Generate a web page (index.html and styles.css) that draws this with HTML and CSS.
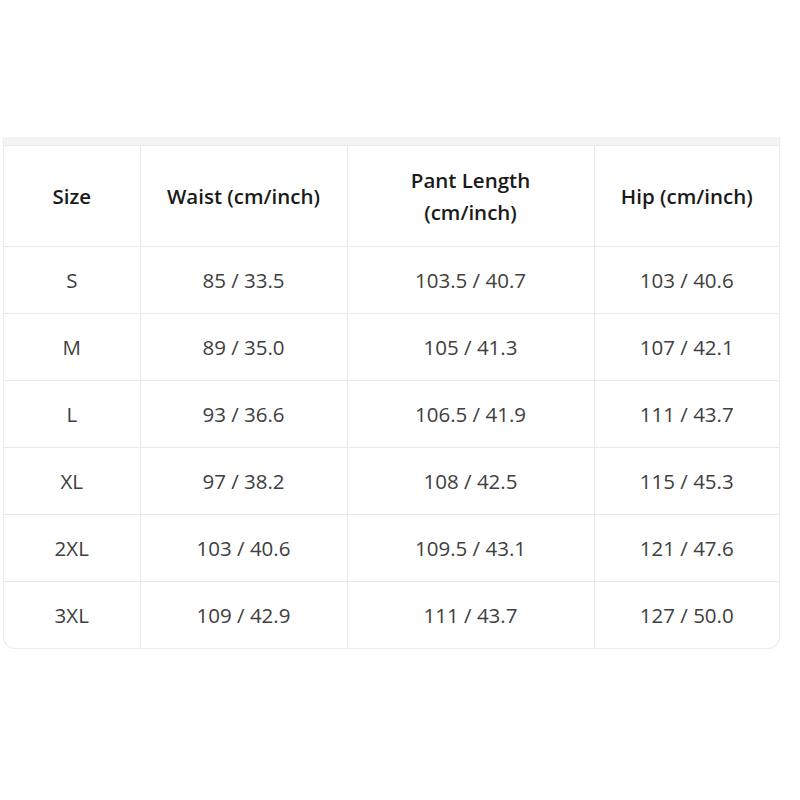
FILE: index.html
```html
<!DOCTYPE html>
<html>
<head>
<meta charset="utf-8">
<link rel="stylesheet" href="styles.css">
</head>
<body>
<div class="card">
  <div class="strip"></div>
  <table class="sizes">
    <colgroup>
      <col class="c1"><col class="c2"><col class="c3"><col class="c4">
    </colgroup>
    <thead>
      <tr><th>Size</th><th>Waist (cm/inch)</th><th>Pant Length<br>(cm/inch)</th><th>Hip (cm/inch)</th></tr>
    </thead>
    <tbody>
      <tr><td>S</td><td>85 / 33.5</td><td>103.5 / 40.7</td><td>103 / 40.6</td></tr>
      <tr><td>M</td><td>89 / 35.0</td><td>105 / 41.3</td><td>107 / 42.1</td></tr>
      <tr><td>L</td><td>93 / 36.6</td><td>106.5 / 41.9</td><td>111 / 43.7</td></tr>
      <tr><td>XL</td><td>97 / 38.2</td><td>108 / 42.5</td><td>115 / 45.3</td></tr>
      <tr><td>2XL</td><td>103 / 40.6</td><td>109.5 / 43.1</td><td>121 / 47.6</td></tr>
      <tr><td>3XL</td><td>109 / 42.9</td><td>111 / 43.7</td><td>127 / 50.0</td></tr>
    </tbody>
  </table>
</div>
</body>
</html>
```
FILE: styles.css
```css
html, body {
  margin: 0;
  padding: 0;
  background: #ffffff;
}
body {
  font-family: "Open Sans", "Noto Sans", sans-serif;
}
.card {
  margin: 137px 0 0 3px;
  width: 777px;
  border: 1px solid #ececec;
  border-top: none;
  border-radius: 0 0 12px 12px;
  overflow: hidden;
  box-sizing: border-box;
}
.strip {
  height: 8px;
  background: #f3f4f5;
}
.sizes {
  width: 100%;
  border-collapse: collapse;
  table-layout: fixed;
}
.c1 { width: 136px; }
.c2 { width: 207px; }
.c3 { width: 247px; }
.c4 { width: auto; }
.sizes th, .sizes td {
  text-align: center;
  border: 1px solid #e8e8e8;
  padding: 0 6px;
  font-size: 20.5px;
}
.sizes tr > :first-child { border-left: none; }
.sizes tr > :last-child { border-right: none; }
.sizes tbody tr:last-child td { border-bottom: none; }
.sizes th {
  height: 100px;
  font-weight: 600;
  color: #1a1a1a;
  line-height: 32px;
}
.sizes td {
  height: 66px;
  color: #404040;
}
```
